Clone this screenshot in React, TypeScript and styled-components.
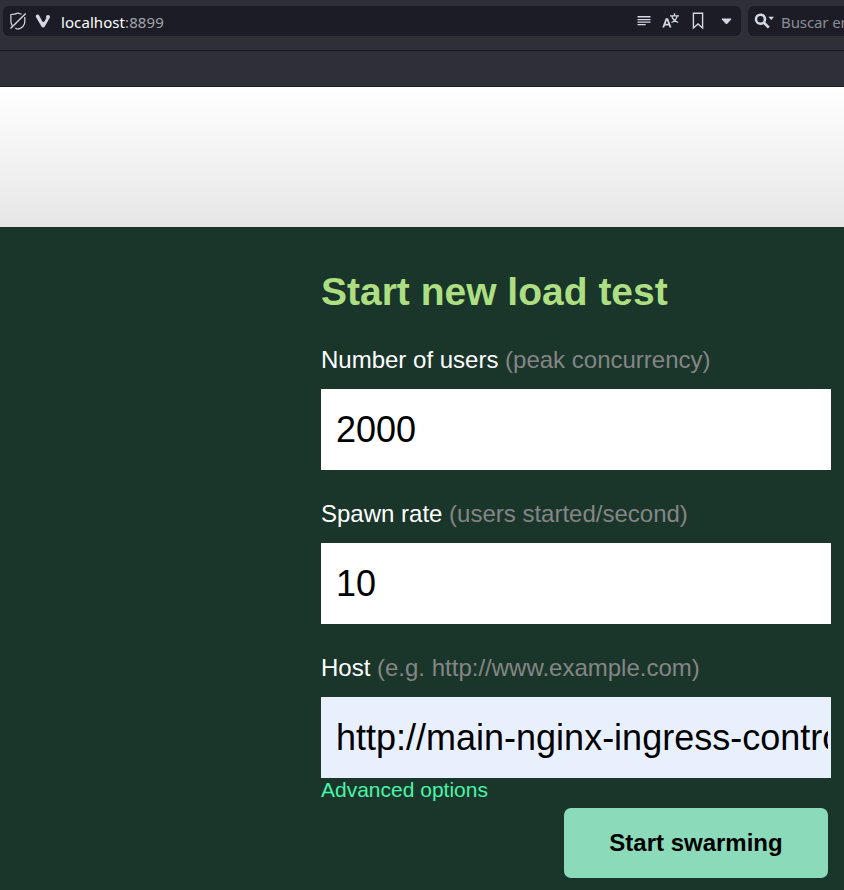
import React from "react";
import styled, { createGlobalStyle } from "styled-components";

const GlobalStyle = createGlobalStyle`
  * { box-sizing: border-box; }
  html, body { margin: 0; height: 890px; overflow: hidden; background: #1a362b; }
  body { font-family: "Liberation Sans", Arial, sans-serif; }
`;

const Page = styled.div`
  width: 844px;
  height: 890px;
  overflow: hidden;
  background: #1a362b;
`;

const Toolbar = styled.div`
  display: flex;
  gap: 7px;
  height: 51px;
  padding: 6px 0 14px 3px;
  background: #2f2f38;
  border-bottom: 1px solid #1c1c24;
  font-family: "Noto Sans", "Open Sans", sans-serif;
  font-size: 15px;
  white-space: nowrap;
`;

const AddressField = styled.div`
  display: flex;
  align-items: center;
  flex: none;
  width: 738px;
  height: 30px;
  padding-left: 6px;
  border-radius: 6px;
  background: #1c1c26;
`;

const SearchField = styled(AddressField)`
  width: 120px;
`;

const Address = styled.span`
  flex: 1;
  margin: 2px 0 0 10px;
  line-height: 20px;
  letter-spacing: 0.08px;
  color: #a3a4ab;
`;

const HostName = styled.span`
  color: #fff;
`;

const SearchHint = styled.span`
  margin: 2px 0 0 6px;
  line-height: 20px;
  letter-spacing: -0.1px;
  color: #8b8c94;
`;

const FieldIcon = styled.svg<{ $gap?: number }>`
  flex: none;
  display: block;
  margin-left: ${({ $gap = 0 }) => $gap}px;
  color: #d3d8e3;
`;

const BookmarkBar = styled.div`
  height: 36px;
  background: #2f2f38;
  border-bottom: 1px solid #1c1c24;
`;

const Banner = styled.div`
  height: 140px;
  background: linear-gradient(#fff, #e6e6e6);
`;

const Form = styled.form`
  display: flex;
  flex-direction: column;
  width: 510px;
  margin-left: 321px;
  padding-top: 42px;
`;

const Title = styled.h2`
  margin: 0 0 29px;
  font-size: 39px;
  line-height: 46px;
  color: #addf82;
`;

const Field = styled.label`
  display: block;
  height: 154px;
  color: #fff;
  font-size: 24px;
  line-height: 32px;
`;

const LastField = styled(Field)`
  height: 126px;
  margin-bottom: -1px;
`;

const Hint = styled.span`
  color: #858585;
`;

const TextInput = styled.input<{ $filled?: boolean }>`
  display: block;
  width: 510px;
  height: 81px;
  margin: 13px 0 0;
  padding: 0 3px 0 15px;
  border: 0;
  border-radius: 0;
  outline: 0;
  background: ${({ $filled }) => ($filled ? "#e8f0fe" : "#fff")};
  color: #000;
  font: 36px "Liberation Sans", Arial, sans-serif;
`;

const Advanced = styled.a`
  align-self: flex-start;
  height: 31px;
  padding-top: 1px;
  color: #4bf3a7;
  font-size: 21px;
  line-height: 24px;
  cursor: pointer;
`;

const StartButton = styled.button`
  align-self: flex-end;
  width: 264px;
  height: 70px;
  margin-right: 3px;
  padding: 0;
  border: 0;
  border-radius: 7px;
  background: #8bdbba;
  color: #000;
  font: bold 24px "Liberation Sans", Arial, sans-serif;
`;

const ShieldIcon = () => (
  <FieldIcon width="18" height="20" viewBox="0 0 18 20" fill="none" stroke="currentColor">
    <path d="M12.5 3.2C10.7 3 9.8 2.5 9 2 7.2 3 4.5 3.5 1.9 3.5v6.8c0 2 .6 3.4 1.4 4.6M15.8 6v4.3c0 4-3 6.8-6.8 7.9-1-.3-1.9-.7-2.7-1.2" strokeWidth="1.2" />
    <path d="M1.5 17.5 16.7 2.6" strokeWidth="1.4" />
  </FieldIcon>
);

const VivaldiIcon = () => (
  <FieldIcon $gap={8} width="16" height="16" viewBox="0 0 16 16" fill="currentColor">
    <path d="M.9 3.9C.1 1.7 3.3.6 4.3 2.8L7.1 8c.7 1.2 1.9 1.2 2.6 0l1.9-3.3 2.6 1.1-4.4 7.6c-.7 1.3-2.6 1.3-3.3 0z" />
    <circle cx="13" cy="3.9" r="2" />
  </FieldIcon>
);

const ReaderIcon = () => (
  <FieldIcon width="14" height="12" viewBox="0 0 14 12" fill="currentColor">
    <path d="M.5 1h13v1.4H.5zM.5 3.9h13v1.3H.5zM.5 6.4h13v1.4H.5zM.5 9h8.2v1.2H.5z" />
  </FieldIcon>
);

const TranslateIcon = () => (
  <FieldIcon $gap={11} width="18" height="18" viewBox="0 0 18 18" fill="none" stroke="currentColor">
    <path d="m1.2 15.5 3.2-8.4h1l3.2 8.4M2.6 12.6h4.6" strokeWidth="1.8" />
    <path d="M8 3.8h9M12.5 1.3v2.5M15.3 3.8c-.8 3-3.1 5.5-5.8 6.7M9.8 4c.8 2.8 3.3 5.4 6.4 6.5" strokeWidth="1.3" />
  </FieldIcon>
);

const BookmarkIcon = () => (
  <FieldIcon $gap={12} width="12" height="18" viewBox="0 0 12 18" fill="none" stroke="currentColor">
    <path d="M1.4 1.3h9.2V16L6 11.9 1.4 16z" strokeWidth="1.4" />
  </FieldIcon>
);

const CaretIcon = () => (
  <FieldIcon $gap={17} width="20" height="10" viewBox="0 0 20 10" fill="currentColor">
    <path d="M.9 3h9.2L5.5 8z" stroke="currentColor" strokeLinejoin="round" strokeWidth="1" />
  </FieldIcon>
);

const SearchIcon = () => (
  <FieldIcon width="21" height="18" viewBox="0 0 21 18" fill="none" stroke="currentColor">
    <circle cx="6.5" cy="7.2" r="4.5" strokeWidth="2.6" />
    <path d="m10 10.8 4.8 4.8" strokeWidth="2.7" />
    <path d="M14.4 4.7H20l-2.8 3.4z" fill="currentColor" stroke="none" />
  </FieldIcon>
);

export default function App() {
  return (
    <Page>
      <GlobalStyle />
      <Toolbar>
        <AddressField>
          <ShieldIcon />
          <VivaldiIcon />
          <Address><HostName>localhost</HostName>:8899</Address>
          <ReaderIcon />
          <TranslateIcon />
          <BookmarkIcon />
          <CaretIcon />
        </AddressField>
        <SearchField>
          <SearchIcon />
          <SearchHint>Buscar en</SearchHint>
        </SearchField>
      </Toolbar>
      <BookmarkBar />
      <Banner />
      <Form onSubmit={(event) => event.preventDefault()}>
        <Title>Start new load test</Title>
        <Field>
          Number of users <Hint>(peak concurrency)</Hint>
          <TextInput defaultValue="2000" />
        </Field>
        <Field>
          Spawn rate <Hint>(users started/second)</Hint>
          <TextInput defaultValue="10" />
        </Field>
        <LastField>
          Host <Hint>(e.g. http://www.example.com)</Hint>
          <TextInput $filled defaultValue="http://main-nginx-ingress-controller" />
        </LastField>
        <Advanced>Advanced options</Advanced>
        <StartButton type="submit">Start swarming</StartButton>
      </Form>
    </Page>
  );
}
